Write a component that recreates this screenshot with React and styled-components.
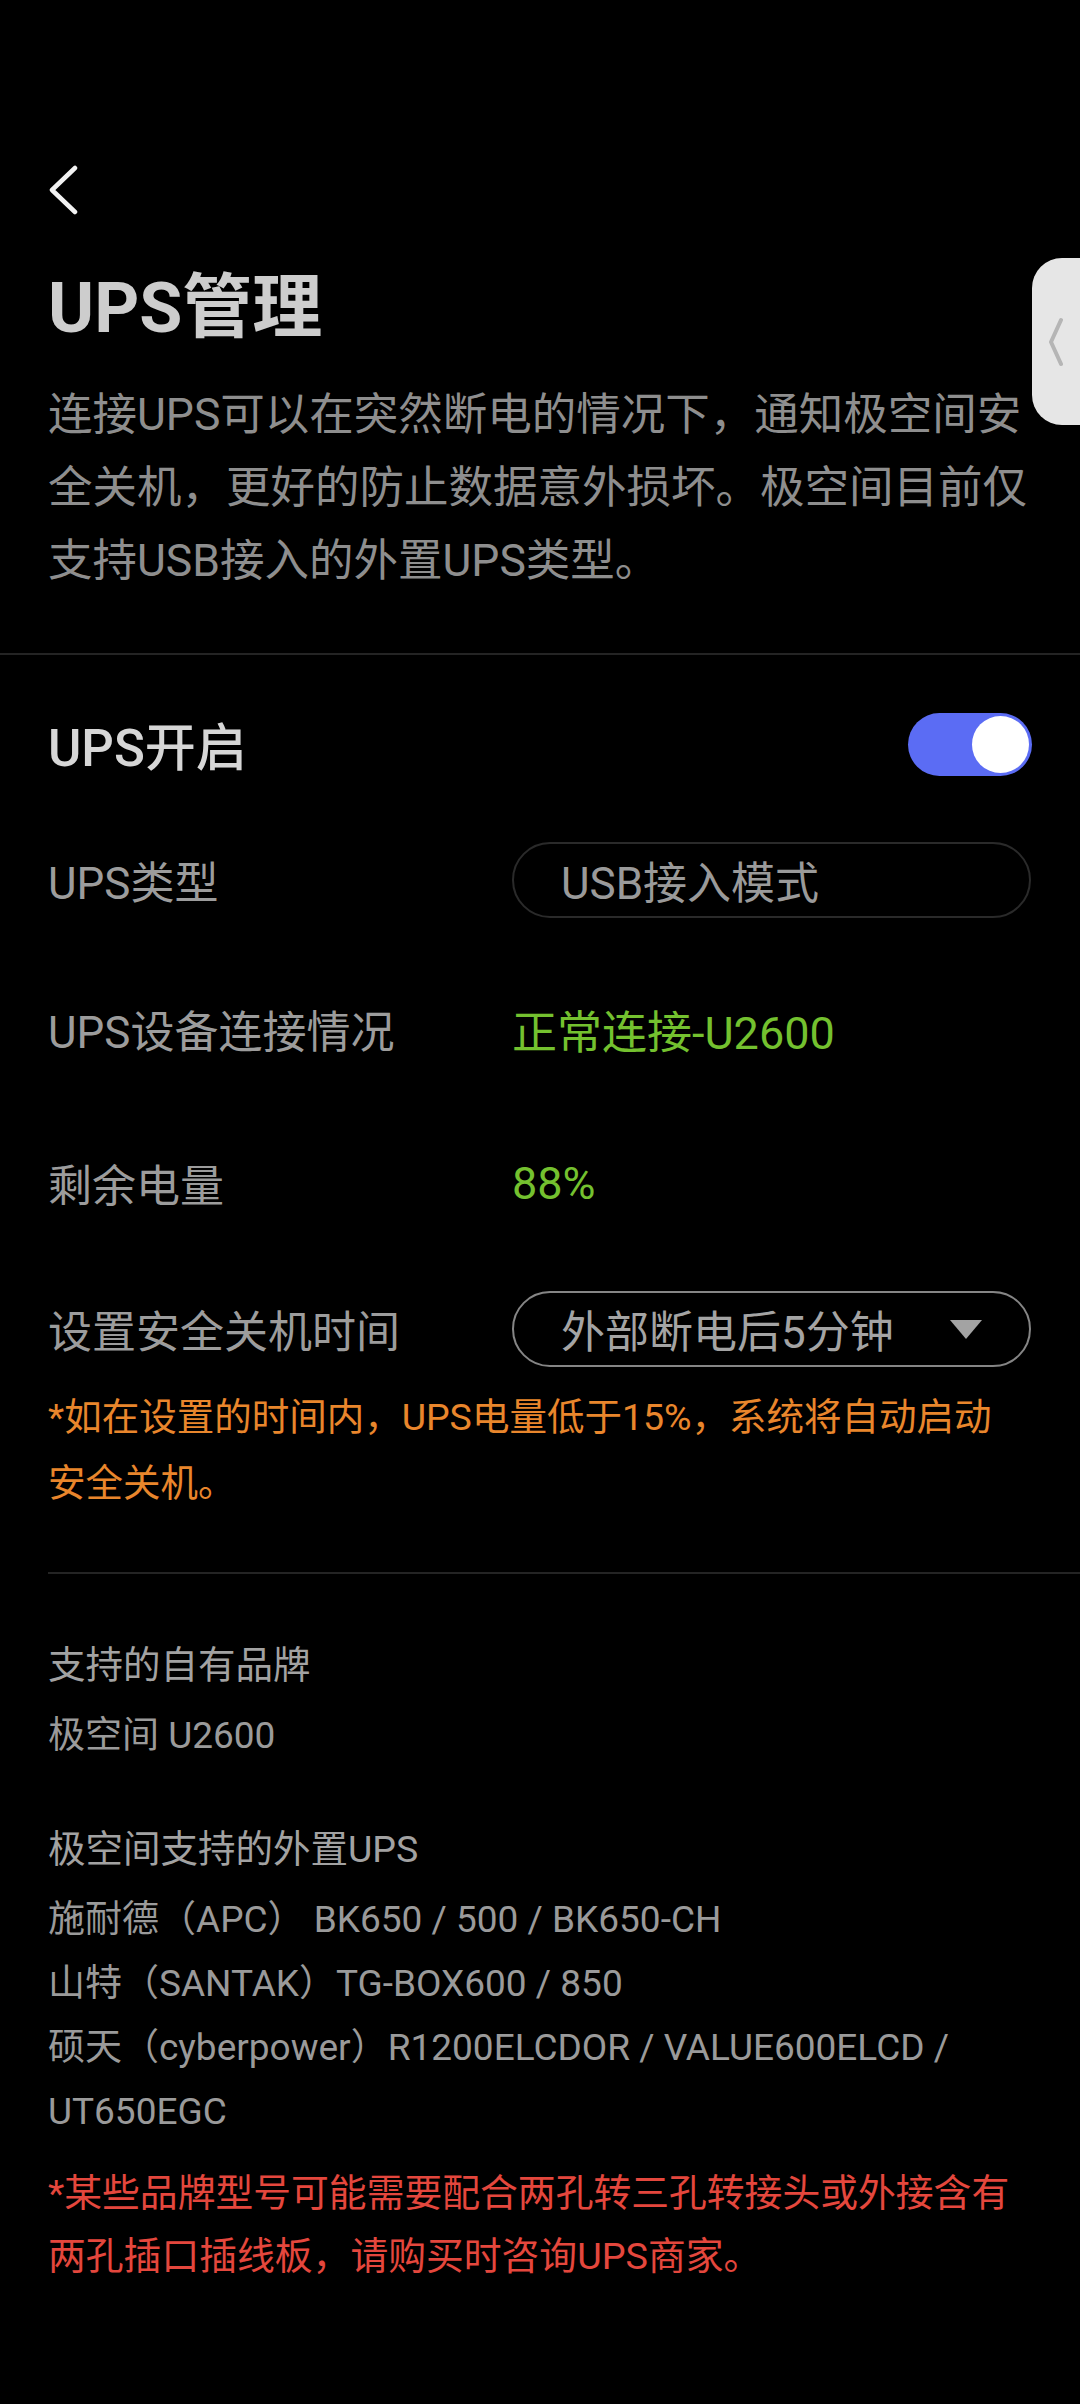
import React from "react";
import styled, { createGlobalStyle } from "styled-components";

const GlobalStyle = createGlobalStyle`
  html, body { margin: 0; padding: 0; background: #000; }
  body {
    font-family: Roboto, "Noto Sans CJK SC", sans-serif;
    -webkit-font-smoothing: antialiased;
  }
  #root { background: #000; }
`;

const Page = styled.div`
  position: relative;
  width: 1080px;
  min-height: 2404px;
  background: #000;
  overflow: hidden;
`;

const Header = styled.header`
  padding: 165px 48px 0;
`;

const BackButton = styled.button`
  display: block;
  width: 30px;
  height: 50px;
  margin: 0;
  padding: 0;
  border: 0;
  background: none;
  cursor: pointer;
`;

const Title = styled.h1`
  margin: 53px 0 0;
  font-size: 70px;
  line-height: 80px;
  font-weight: 700;
  color: #cdcdcd;
`;

const Description = styled.p`
  margin: 31px 0 0;
  font-size: 44.5px;
  line-height: 73px;
  color: #8e8e8e;
  white-space: nowrap;
`;

const Divider = styled.hr`
  margin: ${(p) => p.$mt}px 0 0 ${(p) => p.$inset}px;
  height: 2px;
  border: 0;
  background: #242424;
`;

const Settings = styled.section`
  padding: 0 48px;
`;

const Row = styled.div`
  display: flex;
  align-items: center;
  height: 76px;
  margin-top: ${(p) => p.$mt}px;
`;

const Label = styled.div`
  flex: 0 0 464px;
  font-size: ${(p) => (p.$strong ? 51 : 44)}px;
  font-weight: ${(p) => (p.$strong ? 500 : 400)};
  color: ${(p) => (p.$strong ? "#d6d6d6" : "#9c9c9c")};
  white-space: nowrap;
`;

const Value = styled.div`
  font-size: 45px;
  color: #74c12f;
  white-space: nowrap;
`;

const Toggle = styled.div`
  margin-left: auto;
  width: 124px;
  height: 63px;
  box-sizing: border-box;
  padding: 3px;
  border-radius: 32px;
  background: #5b6cf4;
  display: flex;
  justify-content: flex-end;
`;

const Knob = styled.span`
  width: 57px;
  height: 57px;
  border-radius: 50%;
  background: #fff;
`;

const Field = styled.div`
  flex: 0 0 519px;
  height: 76px;
  box-sizing: border-box;
  display: flex;
  align-items: center;
  padding: 0 47px 0 47px;
  border-radius: 38px;
  border: 2px solid ${(p) => (p.$select ? "#858585" : "#2a2a2a")};
  font-size: 44px;
  color: ${(p) => (p.$select ? "#a4a4a4" : "#9a9a9a")};
  white-space: nowrap;
`;

const Caret = styled.svg`
  margin-left: auto;
  width: 32px;
  height: 19px;
`;

const Note = styled.p`
  margin: ${(p) => p.$mt}px 0 0;
  font-size: ${(p) => p.$size}px;
  line-height: ${(p) => p.$lh}px;
  color: ${(p) => p.$color};
  white-space: nowrap;
`;

const Info = styled.section`
  padding: 0 48px;
`;

const InfoGroup = styled.div`
  margin-top: ${(p) => p.$mt}px;
`;

const InfoHeading = styled.div`
  font-size: 37.5px;
  line-height: 64px;
  color: #a2a2a2;
  margin-bottom: 7px;
  white-space: nowrap;
`;

const InfoLine = styled.div`
  font-size: 37px;
  line-height: 64px;
  color: #9a9a9a;
  white-space: nowrap;
`;

const SideTab = styled.div`
  position: absolute;
  top: 258px;
  right: 0;
  width: 48px;
  height: 167px;
  border-radius: 30px 0 0 30px;
  background: #e6e6e6;
  display: flex;
  align-items: center;
  padding-left: 17px;
  box-sizing: border-box;
`;

export default function App() {
  return (
    <Page>
      <GlobalStyle />
      <Header>
        <BackButton aria-label="返回">
          <svg width="30" height="50" viewBox="0 0 30 50">
            <polyline
              points="27,3 4,25 27,47"
              fill="none"
              stroke="#f2f2f2"
              strokeWidth="4.5"
              strokeLinecap="round"
              strokeLinejoin="round"
            />
          </svg>
        </BackButton>
        <Title>UPS管理</Title>
        <Description>
          连接UPS可以在突然断电的情况下，通知极空间安
          <br />
          全关机，更好的防止数据意外损坏。极空间目前仅
          <br />
          支持USB接入的外置UPS类型。
        </Description>
      </Header>

      <Divider $mt={55} $inset={0} />

      <Settings>
        <Row $mt={51}>
          <Label $strong>UPS开启</Label>
          <Toggle>
            <Knob />
          </Toggle>
        </Row>
        <Row $mt={60}>
          <Label>UPS类型</Label>
          <Field>USB接入模式</Field>
        </Row>
        <Row $mt={73}>
          <Label>UPS设备连接情况</Label>
          <Value>正常连接-U2600</Value>
        </Row>
        <Row $mt={78}>
          <Label>剩余电量</Label>
          <Value>88%</Value>
        </Row>
        <Row $mt={70}>
          <Label>设置安全关机时间</Label>
          <Field $select>
            外部断电后5分钟
            <Caret viewBox="0 0 32 19">
              <polygon points="0,0 32,0 16,19" fill="#a3a3a3" />
            </Caret>
          </Field>
        </Row>
        <Note $mt={17} $size={37.5} $lh={66} $color="#e9862c">
          *如在设置的时间内，UPS电量低于15%，系统将自动启动
          <br />
          安全关机。
        </Note>
      </Settings>

      <Divider $mt={56} $inset={48} />

      <Info>
        <InfoGroup $mt={59}>
          <InfoHeading>支持的自有品牌</InfoHeading>
          <InfoLine>极空间 U2600</InfoLine>
        </InfoGroup>
        <InfoGroup $mt={49}>
          <InfoHeading>极空间支持的外置UPS</InfoHeading>
          <InfoLine>施耐德（APC） BK650 / 500 / BK650-CH</InfoLine>
          <InfoLine>山特（SANTAK）TG-BOX600 / 850</InfoLine>
          <InfoLine>硕天（cyberpower）R1200ELCDOR / VALUE600ELCD /</InfoLine>
          <InfoLine>UT650EGC</InfoLine>
        </InfoGroup>
        <Note $mt={18} $size={37.8} $lh={63} $color="#e4473d">
          *某些品牌型号可能需要配合两孔转三孔转接头或外接含有
          <br />
          两孔插口插线板，请购买时咨询UPS商家。
        </Note>
      </Info>

      <SideTab>
        <svg width="14" height="50" viewBox="0 0 14 50">
          <polyline
            points="12,3 2,25 12,47"
            fill="none"
            stroke="#b5b5b5"
            strokeWidth="4"
            strokeLinecap="round"
            strokeLinejoin="round"
          />
        </svg>
      </SideTab>
    </Page>
  );
}
